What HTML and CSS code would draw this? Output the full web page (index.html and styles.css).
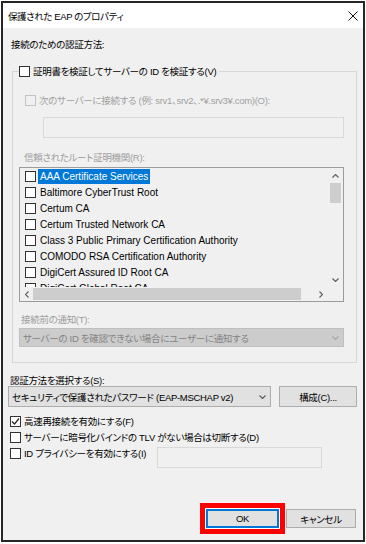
FILE: index.html
```html
<!DOCTYPE html>
<html lang="ja">
<head>
    <meta charset="UTF-8">
    <meta name="viewport" content="width=device-width, initial-scale=1.0">
    <title>保護された EAP のプロパティ</title>
    <link rel="stylesheet" href="styles.css">
</head>
<body>
    <div class="window">
        <div class="titlebar">
            <span class="title">保護された EAP のプロパティ</span>
            <svg class="close" viewBox="0 0 10 10"><path d="M0.5 0.5L9.5 9.5M9.5 0.5L0.5 9.5"/></svg>
        </div>

        <div class="content">
            <div class="label label-top">接続のための認証方法:</div>

            <div class="group">
                <div class="check group-head"><span class="box"></span>証明書を検証してサーバーの ID を検証する(V)</div>
                <div class="check disabled server-check"><span class="box"></span>次のサーバーに接続する (例: srv1、srv2、.*¥.srv3¥.com)(O):</div>
                <div class="textbox server-input"></div>

                <div class="label muted ca-label">信頼されたルート証明機関(R):</div>
                <div class="listbox">
                    <div class="list-items">
                        <div class="item"><span class="box"></span><span class="item-text selected">AAA Certificate Services</span></div>
                        <div class="item"><span class="box"></span><span class="item-text">Baltimore CyberTrust Root</span></div>
                        <div class="item"><span class="box"></span><span class="item-text">Certum CA</span></div>
                        <div class="item"><span class="box"></span><span class="item-text">Certum Trusted Network CA</span></div>
                        <div class="item"><span class="box"></span><span class="item-text">Class 3 Public Primary Certification Authority</span></div>
                        <div class="item"><span class="box"></span><span class="item-text">COMODO RSA Certification Authority</span></div>
                        <div class="item"><span class="box"></span><span class="item-text">DigiCert Assured ID Root CA</span></div>
                        <div class="item"><span class="box"></span><span class="item-text">DigiCert Global Root CA</span></div>
                    </div>
                    <div class="vscroll">
                        <div class="arrow"><svg class="chevron" viewBox="0 0 7 4"><path d="M0.5 3.5L3.5 0.5L6.5 3.5"/></svg></div>
                        <div class="vthumb"></div>
                        <div class="spacer"></div>
                        <div class="arrow"><svg class="chevron" viewBox="0 0 7 4"><path d="M0.5 0.5L3.5 3.5L6.5 0.5"/></svg></div>
                    </div>
                    <div class="hscroll">
                        <div class="arrow arrow-left"><svg class="chevron-side" viewBox="0 0 4 7"><path d="M3.5 0.5L0.5 3.5L3.5 6.5"/></svg></div>
                        <div class="hthumb"></div>
                        <div class="spacer"></div>
                        <div class="arrow arrow-right"><svg class="chevron-side" viewBox="0 0 4 7"><path d="M0.5 0.5L3.5 3.5L0.5 6.5"/></svg></div>
                    </div>
                    <div class="corner"></div>
                </div>

                <div class="label muted notify-label">接続前の通知(T):</div>
                <div class="combo notify-combo">
                    <span>サーバーの ID を確認できない場合にユーザーに通知する</span>
                    <svg class="chevron chevron-muted" viewBox="0 0 7 4"><path d="M0.5 0.5L3.5 3.5L6.5 0.5"/></svg>
                </div>
            </div>

            <div class="label method-label">認証方法を選択する(S):</div>
            <div class="method-row">
                <div class="combo method-combo">
                    <span>セキュリティで保護されたパスワード (EAP-MSCHAP v2)</span>
                    <svg class="chevron" viewBox="0 0 7 4"><path d="M0.5 0.5L3.5 3.5L6.5 0.5"/></svg>
                </div>
                <button class="btn config-btn">構成(C)...</button>
            </div>

            <div class="options">
                <div class="check option">
                    <span class="box"><svg class="tick" viewBox="0 0 9 9"><path d="M1 4.5L3.5 7L8 1.5"/></svg></span>高速再接続を有効にする(F)
                </div>
                <div class="check option"><span class="box"></span>サーバーに暗号化バインドの TLV がない場合は切断する(D)</div>
                <div class="option-row">
                    <div class="check option"><span class="box"></span>ID プライバシーを有効にする(I)</div>
                    <div class="textbox privacy-input"></div>
                </div>
            </div>

            <div class="actions">
                <button class="btn btn-default">OK</button>
                <button class="btn btn-cancel">キャンセル</button>
            </div>
        </div>
    </div>
</body>
</html>
```

FILE: styles.css
```css
* {
    margin: 0;
    padding: 0;
    box-sizing: border-box;
}

body {
    background: #fff;
    color: #000;
    font-family: "Liberation Sans", "Noto Sans CJK JP", sans-serif;
    font-size: 9.5px;
    letter-spacing: -0.3px;
    font-feature-settings: "palt";
}

button {
    font: inherit;
    color: inherit;
    letter-spacing: inherit;
}

/* Window frame */
.window {
    margin: 1px;
    width: 364px;
    height: 541px;
    border: 2px solid #262626;
    background: #f0f0f0;
}

.titlebar {
    height: 25px;
    padding: 0 5px;
    background: #fff;
    display: flex;
    align-items: center;
    justify-content: space-between;
}

.title {
    font-size: 9.5px;
    letter-spacing: -0.4px;
}

.close {
    width: 10px;
    height: 10px;
    fill: none;
    stroke: #111;
    stroke-width: 1;
}

.content {
    padding: 10px 6px 0 5px;
}

.label {
    height: 14px;
    line-height: 14px;
    white-space: nowrap;
}

.muted {
    color: #9d9d9d;
}

.label-top {
    margin-left: 3px;
}

/* Checkboxes */
.check {
    display: flex;
    align-items: center;
    gap: 3px;
    height: 14px;
    white-space: nowrap;
}

.box {
    width: 11px;
    height: 11px;
    border: 1px solid #333;
    background: #fff;
    flex: none;
    display: flex;
    align-items: center;
    justify-content: center;
}

.check.disabled {
    color: #a0a0a0;
}

.check.disabled .box {
    border-color: #c3c3c3;
    background: #f0f0f0;
}

.tick {
    width: 9px;
    height: 9px;
    fill: none;
    stroke: #222;
    stroke-width: 1.2;
}

/* Group box */
.group {
    margin: 19px 0 0 4px;
    border: 1px solid #d7d7d7;
    padding-bottom: 15px;
}

.group-head {
    margin: -8px 0 0 6px;
    width: fit-content;
    padding-right: 3px;
    background: #f0f0f0;
}

.server-check {
    margin: 15px 0 0 12px;
}

.textbox {
    height: 21px;
    border: 1px solid #d9d9d9;
    background: #f0f0f0;
}

.server-input {
    margin: 10px 12px 0 30px;
}

.ca-label {
    margin: 13px 0 0 11px;
}

/* Certificate list */
.listbox {
    margin: 2px 12px 0 6px;
    height: 135px;
    border: 1px solid #9c9c9c;
    display: grid;
    grid-template-columns: 1fr 15px;
    grid-template-rows: 1fr 14px;
}

.list-items {
    overflow: hidden;
}

.item {
    height: 16px;
    padding-left: 5px;
    display: flex;
    align-items: center;
    gap: 2px;
    white-space: nowrap;
}

.item-text {
    font-size: 10px;
    letter-spacing: 0;
    line-height: 15px;
    padding: 0 2px;
}

.item-text.selected {
    background: #0078d7;
    color: #fff;
}

.vscroll {
    display: flex;
    flex-direction: column;
}

.vscroll .arrow {
    height: 15px;
}

.arrow {
    display: flex;
    align-items: center;
    justify-content: center;
    flex: none;
}

.vthumb {
    height: 20px;
    margin: 0 2px;
    background: #cdcdcd;
}

.spacer {
    flex: 1;
}

.hscroll {
    display: flex;
}

.arrow-left {
    width: 13px;
}

.arrow-right {
    width: 15px;
}

.hthumb {
    width: 268px;
    margin: 1px 0;
    background: #cdcdcd;
}

.chevron {
    width: 7px;
    height: 4px;
    fill: none;
    stroke: #606060;
    stroke-width: 1.2;
}

.chevron-side {
    width: 4px;
    height: 7px;
    fill: none;
    stroke: #606060;
    stroke-width: 1.2;
}

.chevron-muted {
    stroke: #a8a8a8;
}

.notify-label {
    margin: 11px 0 0 8px;
}

/* Combo boxes and buttons */
.combo {
    display: flex;
    align-items: center;
    justify-content: space-between;
    border: 1px solid #adadad;
    background: #e1e1e1;
    white-space: nowrap;
}

.notify-combo {
    margin: 1px 12px 0 6px;
    height: 19px;
    padding: 0 4px 0 3px;
    background: #cccccc;
    border-color: #bfbfbf;
    color: #838383;
}

.method-label {
    margin: 11px 0 0 2px;
}

.method-row {
    display: flex;
    gap: 8px;
    height: 21px;
    margin-top: -2px;
}

.method-combo {
    width: 263px;
    padding: 0 4px 0 3px;
}

.btn {
    border: 1px solid #adadad;
    background: #e1e1e1;
}

.config-btn {
    width: 78px;
}

.options {
    margin-top: 6px;
}

.option {
    height: 16px;
    margin-left: 2px;
}

.option-row {
    display: flex;
    align-items: flex-start;
}

.privacy-input {
    width: 165px;
    margin: 2px 35px 0 auto;
}

.actions {
    display: flex;
    justify-content: flex-end;
    gap: 7px;
    margin: 41px 1px 0 0;
}

.actions .btn {
    height: 19px;
}

.btn-default {
    width: 73px;
    border-color: #0078d7;
    box-shadow: inset 0 0 0 1px #0078d7, 0 0 0 1px #fff, 0 0 0 6px #f00;
}

.btn-cancel {
    width: 70px;
}
```
